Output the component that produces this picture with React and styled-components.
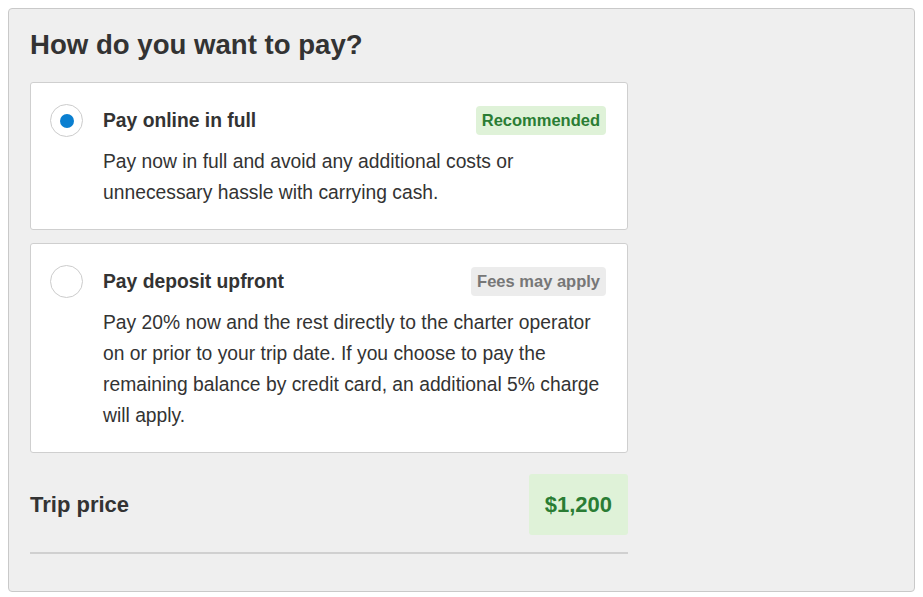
import React from 'react';
import styled, { createGlobalStyle } from 'styled-components';

const GlobalStyle = createGlobalStyle`
  body {
    margin: 8px;
    background: #fff;
    font-family: "Liberation Sans", Arial, sans-serif;
    color: #333;
  }
`

const Panel = styled.div`
  box-sizing: border-box;
  border: 1px solid #c9c9c9;
  border-radius: 4px;
  background-color: #efefef;
  padding: 21px 21px 37px;
`

const Content = styled.div`
  width: 598px;
  display: flex;
  flex-direction: column;
`

const Heading = styled.h2`
  margin: 0 0 22px;
  font-size: 27.6px;
  line-height: 30px;
  font-weight: bold;
  color: #333;
`

const Options = styled.div`
  display: flex;
  flex-direction: column;
  gap: 13px;
`

const Card = styled.label`
  box-sizing: border-box;
  background: #fff;
  border: 1px solid #cfcfcf;
  border-radius: 3px;
  padding: 23px 21px 21px 19px;
  display: flex;
  gap: 20px;
  cursor: pointer;
`

const Radio = styled.span`
  flex: none;
  box-sizing: border-box;
  width: 33px;
  height: 33px;
  margin-top: -2px;
  border-radius: 50%;
  border: 1px solid #cccccc;
  background: #fff;
  display: flex;
  align-items: center;
  justify-content: center;

  &::after {
    content: '';
    width: 14px;
    height: 14px;
    border-radius: 50%;
    background: ${p => (p.$checked ? '#0a7fd0' : 'transparent')};
  }
`

const Body = styled.div`
  flex: 1;
  display: flex;
  flex-direction: column;
  gap: 11px;
`

const Top = styled.div`
  display: flex;
  align-items: center;
  justify-content: space-between;
`

const Title = styled.span`
  font-size: 19.3px;
  font-weight: bold;
  color: #333;
`

const Badge = styled.span`
  background: ${p => (p.$tone === 'green' ? '#dff2d8' : '#ececec')};
  color: ${p => (p.$tone === 'green' ? '#2a7d34' : '#777')};
  font-size: 16.5px;
  font-weight: bold;
  line-height: 29px;
  padding: 0 6px;
  border-radius: 4px;
`

const Text = styled.p`
  margin: 0;
  font-size: 19.3px;
  line-height: 31px;
  color: #333;
`

const PriceRow = styled.div`
  margin-top: 21px;
  display: flex;
  align-items: center;
  justify-content: space-between;
  padding-bottom: 17px;
  border-bottom: 2px solid #d0d0d0;
`

const PriceLabel = styled.span`
  font-size: 22px;
  font-weight: bold;
  color: #333;
`

const Price = styled.span`
  background: #dff2d8;
  color: #2a7d34;
  font-size: 22px;
  font-weight: bold;
  line-height: 61px;
  padding: 0 16px;
  border-radius: 3px;
`

const options = [
  {
    title: 'Pay online in full',
    badge: 'Recommended',
    tone: 'green',
    text: 'Pay now in full and avoid any additional costs or unnecessary hassle with carrying cash.',
    checked: true,
  },
  {
    title: 'Pay deposit upfront',
    badge: 'Fees may apply',
    tone: 'grey',
    text: 'Pay 20% now and the rest directly to the charter operator on or prior to your trip date. If you choose to pay the remaining balance by credit card, an additional 5% charge will apply.',
    checked: false,
  },
]

function App() {
  return (
    <>
      <GlobalStyle />
      <Panel>
        <Content>
          <Heading>How do you want to pay?</Heading>
          <Options>
            {options.map(o => (
              <Card key={o.title}>
                <Radio $checked={o.checked} />
                <Body>
                  <Top>
                    <Title>{o.title}</Title>
                    <Badge $tone={o.tone}>{o.badge}</Badge>
                  </Top>
                  <Text>{o.text}</Text>
                </Body>
              </Card>
            ))}
          </Options>
          <PriceRow>
            <PriceLabel>Trip price</PriceLabel>
            <Price>$1,200</Price>
          </PriceRow>
        </Content>
      </Panel>
    </>
  );
}

export default App;
